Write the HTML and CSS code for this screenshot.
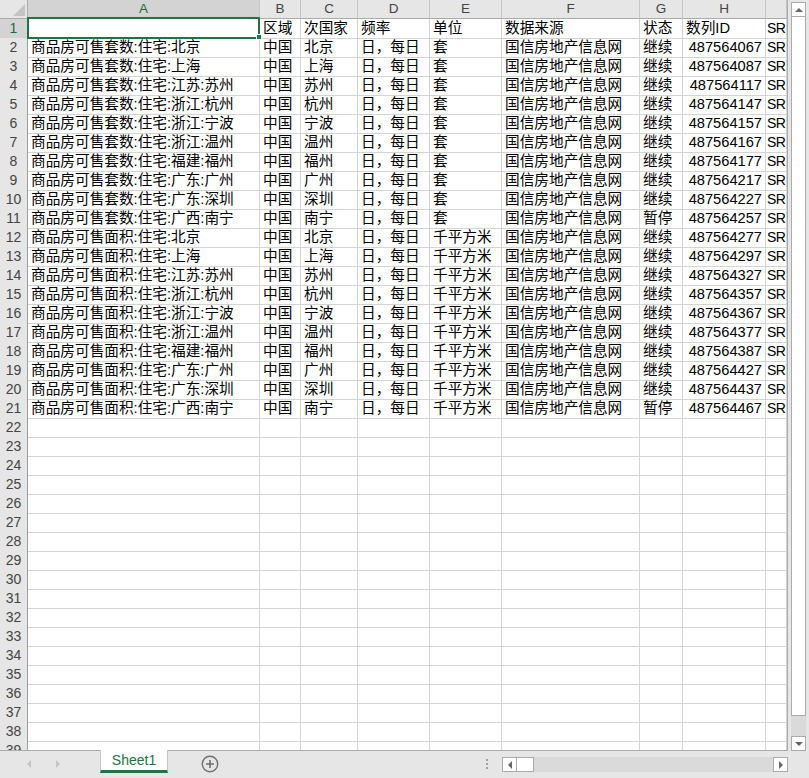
FILE: index.html
```html
<!DOCTYPE html>
<html lang="zh">
<head>
<meta charset="utf-8">
<title>Sheet1</title>
<link rel="stylesheet" href="styles.css">
</head>
<body>
<div class="app">
  <div class="main">
    <div class="sheet">
      <div class="row head">
        <div class="corner"><span class="corner-tri"></span></div>
        <div class="ch ch-sel">A</div><div class="ch">B</div><div class="ch">C</div><div class="ch">D</div><div class="ch">E</div><div class="ch">F</div><div class="ch">G</div><div class="ch">H</div><div class="ch"></div>
      </div>
      <div class="row"><div class="rh rh-sel">1</div><div class="c sel"><span class="handle"></span></div><div class="c">区域</div><div class="c">次国家</div><div class="c">频率</div><div class="c">单位</div><div class="c">数据来源</div><div class="c">状态</div><div class="c">数列ID</div><div class="c last">SR</div></div>
      <div class="row"><div class="rh">2</div><div class="c">商品房可售套数:住宅:北京</div><div class="c">中国</div><div class="c">北京</div><div class="c">日，每日</div><div class="c">套</div><div class="c">国信房地产信息网</div><div class="c">继续</div><div class="c num">487564067</div><div class="c last">SR</div></div>
      <div class="row"><div class="rh">3</div><div class="c">商品房可售套数:住宅:上海</div><div class="c">中国</div><div class="c">上海</div><div class="c">日，每日</div><div class="c">套</div><div class="c">国信房地产信息网</div><div class="c">继续</div><div class="c num">487564087</div><div class="c last">SR</div></div>
      <div class="row"><div class="rh">4</div><div class="c">商品房可售套数:住宅:江苏:苏州</div><div class="c">中国</div><div class="c">苏州</div><div class="c">日，每日</div><div class="c">套</div><div class="c">国信房地产信息网</div><div class="c">继续</div><div class="c num">487564117</div><div class="c last">SR</div></div>
      <div class="row"><div class="rh">5</div><div class="c">商品房可售套数:住宅:浙江:杭州</div><div class="c">中国</div><div class="c">杭州</div><div class="c">日，每日</div><div class="c">套</div><div class="c">国信房地产信息网</div><div class="c">继续</div><div class="c num">487564147</div><div class="c last">SR</div></div>
      <div class="row"><div class="rh">6</div><div class="c">商品房可售套数:住宅:浙江:宁波</div><div class="c">中国</div><div class="c">宁波</div><div class="c">日，每日</div><div class="c">套</div><div class="c">国信房地产信息网</div><div class="c">继续</div><div class="c num">487564157</div><div class="c last">SR</div></div>
      <div class="row"><div class="rh">7</div><div class="c">商品房可售套数:住宅:浙江:温州</div><div class="c">中国</div><div class="c">温州</div><div class="c">日，每日</div><div class="c">套</div><div class="c">国信房地产信息网</div><div class="c">继续</div><div class="c num">487564167</div><div class="c last">SR</div></div>
      <div class="row"><div class="rh">8</div><div class="c">商品房可售套数:住宅:福建:福州</div><div class="c">中国</div><div class="c">福州</div><div class="c">日，每日</div><div class="c">套</div><div class="c">国信房地产信息网</div><div class="c">继续</div><div class="c num">487564177</div><div class="c last">SR</div></div>
      <div class="row"><div class="rh">9</div><div class="c">商品房可售套数:住宅:广东:广州</div><div class="c">中国</div><div class="c">广州</div><div class="c">日，每日</div><div class="c">套</div><div class="c">国信房地产信息网</div><div class="c">继续</div><div class="c num">487564217</div><div class="c last">SR</div></div>
      <div class="row"><div class="rh">10</div><div class="c">商品房可售套数:住宅:广东:深圳</div><div class="c">中国</div><div class="c">深圳</div><div class="c">日，每日</div><div class="c">套</div><div class="c">国信房地产信息网</div><div class="c">继续</div><div class="c num">487564227</div><div class="c last">SR</div></div>
      <div class="row"><div class="rh">11</div><div class="c">商品房可售套数:住宅:广西:南宁</div><div class="c">中国</div><div class="c">南宁</div><div class="c">日，每日</div><div class="c">套</div><div class="c">国信房地产信息网</div><div class="c">暂停</div><div class="c num">487564257</div><div class="c last">SR</div></div>
      <div class="row"><div class="rh">12</div><div class="c">商品房可售面积:住宅:北京</div><div class="c">中国</div><div class="c">北京</div><div class="c">日，每日</div><div class="c">千平方米</div><div class="c">国信房地产信息网</div><div class="c">继续</div><div class="c num">487564277</div><div class="c last">SR</div></div>
      <div class="row"><div class="rh">13</div><div class="c">商品房可售面积:住宅:上海</div><div class="c">中国</div><div class="c">上海</div><div class="c">日，每日</div><div class="c">千平方米</div><div class="c">国信房地产信息网</div><div class="c">继续</div><div class="c num">487564297</div><div class="c last">SR</div></div>
      <div class="row"><div class="rh">14</div><div class="c">商品房可售面积:住宅:江苏:苏州</div><div class="c">中国</div><div class="c">苏州</div><div class="c">日，每日</div><div class="c">千平方米</div><div class="c">国信房地产信息网</div><div class="c">继续</div><div class="c num">487564327</div><div class="c last">SR</div></div>
      <div class="row"><div class="rh">15</div><div class="c">商品房可售面积:住宅:浙江:杭州</div><div class="c">中国</div><div class="c">杭州</div><div class="c">日，每日</div><div class="c">千平方米</div><div class="c">国信房地产信息网</div><div class="c">继续</div><div class="c num">487564357</div><div class="c last">SR</div></div>
      <div class="row"><div class="rh">16</div><div class="c">商品房可售面积:住宅:浙江:宁波</div><div class="c">中国</div><div class="c">宁波</div><div class="c">日，每日</div><div class="c">千平方米</div><div class="c">国信房地产信息网</div><div class="c">继续</div><div class="c num">487564367</div><div class="c last">SR</div></div>
      <div class="row"><div class="rh">17</div><div class="c">商品房可售面积:住宅:浙江:温州</div><div class="c">中国</div><div class="c">温州</div><div class="c">日，每日</div><div class="c">千平方米</div><div class="c">国信房地产信息网</div><div class="c">继续</div><div class="c num">487564377</div><div class="c last">SR</div></div>
      <div class="row"><div class="rh">18</div><div class="c">商品房可售面积:住宅:福建:福州</div><div class="c">中国</div><div class="c">福州</div><div class="c">日，每日</div><div class="c">千平方米</div><div class="c">国信房地产信息网</div><div class="c">继续</div><div class="c num">487564387</div><div class="c last">SR</div></div>
      <div class="row"><div class="rh">19</div><div class="c">商品房可售面积:住宅:广东:广州</div><div class="c">中国</div><div class="c">广州</div><div class="c">日，每日</div><div class="c">千平方米</div><div class="c">国信房地产信息网</div><div class="c">继续</div><div class="c num">487564427</div><div class="c last">SR</div></div>
      <div class="row"><div class="rh">20</div><div class="c">商品房可售面积:住宅:广东:深圳</div><div class="c">中国</div><div class="c">深圳</div><div class="c">日，每日</div><div class="c">千平方米</div><div class="c">国信房地产信息网</div><div class="c">继续</div><div class="c num">487564437</div><div class="c last">SR</div></div>
      <div class="row"><div class="rh">21</div><div class="c">商品房可售面积:住宅:广西:南宁</div><div class="c">中国</div><div class="c">南宁</div><div class="c">日，每日</div><div class="c">千平方米</div><div class="c">国信房地产信息网</div><div class="c">暂停</div><div class="c num">487564467</div><div class="c last">SR</div></div>
      <div class="row"><div class="rh">22</div><div class="c"></div><div class="c"></div><div class="c"></div><div class="c"></div><div class="c"></div><div class="c"></div><div class="c"></div><div class="c"></div><div class="c"></div></div>
      <div class="row"><div class="rh">23</div><div class="c"></div><div class="c"></div><div class="c"></div><div class="c"></div><div class="c"></div><div class="c"></div><div class="c"></div><div class="c"></div><div class="c"></div></div>
      <div class="row"><div class="rh">24</div><div class="c"></div><div class="c"></div><div class="c"></div><div class="c"></div><div class="c"></div><div class="c"></div><div class="c"></div><div class="c"></div><div class="c"></div></div>
      <div class="row"><div class="rh">25</div><div class="c"></div><div class="c"></div><div class="c"></div><div class="c"></div><div class="c"></div><div class="c"></div><div class="c"></div><div class="c"></div><div class="c"></div></div>
      <div class="row"><div class="rh">26</div><div class="c"></div><div class="c"></div><div class="c"></div><div class="c"></div><div class="c"></div><div class="c"></div><div class="c"></div><div class="c"></div><div class="c"></div></div>
      <div class="row"><div class="rh">27</div><div class="c"></div><div class="c"></div><div class="c"></div><div class="c"></div><div class="c"></div><div class="c"></div><div class="c"></div><div class="c"></div><div class="c"></div></div>
      <div class="row"><div class="rh">28</div><div class="c"></div><div class="c"></div><div class="c"></div><div class="c"></div><div class="c"></div><div class="c"></div><div class="c"></div><div class="c"></div><div class="c"></div></div>
      <div class="row"><div class="rh">29</div><div class="c"></div><div class="c"></div><div class="c"></div><div class="c"></div><div class="c"></div><div class="c"></div><div class="c"></div><div class="c"></div><div class="c"></div></div>
      <div class="row"><div class="rh">30</div><div class="c"></div><div class="c"></div><div class="c"></div><div class="c"></div><div class="c"></div><div class="c"></div><div class="c"></div><div class="c"></div><div class="c"></div></div>
      <div class="row"><div class="rh">31</div><div class="c"></div><div class="c"></div><div class="c"></div><div class="c"></div><div class="c"></div><div class="c"></div><div class="c"></div><div class="c"></div><div class="c"></div></div>
      <div class="row"><div class="rh">32</div><div class="c"></div><div class="c"></div><div class="c"></div><div class="c"></div><div class="c"></div><div class="c"></div><div class="c"></div><div class="c"></div><div class="c"></div></div>
      <div class="row"><div class="rh">33</div><div class="c"></div><div class="c"></div><div class="c"></div><div class="c"></div><div class="c"></div><div class="c"></div><div class="c"></div><div class="c"></div><div class="c"></div></div>
      <div class="row"><div class="rh">34</div><div class="c"></div><div class="c"></div><div class="c"></div><div class="c"></div><div class="c"></div><div class="c"></div><div class="c"></div><div class="c"></div><div class="c"></div></div>
      <div class="row"><div class="rh">35</div><div class="c"></div><div class="c"></div><div class="c"></div><div class="c"></div><div class="c"></div><div class="c"></div><div class="c"></div><div class="c"></div><div class="c"></div></div>
      <div class="row"><div class="rh">36</div><div class="c"></div><div class="c"></div><div class="c"></div><div class="c"></div><div class="c"></div><div class="c"></div><div class="c"></div><div class="c"></div><div class="c"></div></div>
      <div class="row"><div class="rh">37</div><div class="c"></div><div class="c"></div><div class="c"></div><div class="c"></div><div class="c"></div><div class="c"></div><div class="c"></div><div class="c"></div><div class="c"></div></div>
      <div class="row"><div class="rh">38</div><div class="c"></div><div class="c"></div><div class="c"></div><div class="c"></div><div class="c"></div><div class="c"></div><div class="c"></div><div class="c"></div><div class="c"></div></div>
      <div class="row"><div class="rh">39</div><div class="c"></div><div class="c"></div><div class="c"></div><div class="c"></div><div class="c"></div><div class="c"></div><div class="c"></div><div class="c"></div><div class="c"></div></div>
    </div>
    <div class="vscroll">
      <div class="sbtn"><span class="tri-up"></span></div>
      <div class="vthumb"></div>
      <div class="vtrack"></div>
      <div class="sbtn"><span class="tri-down"></span></div>
    </div>
  </div>
  <div class="bottombar">
    <div class="nav">
      <span class="tri-left light"></span>
      <span class="tri-right light"></span>
    </div>
    <div class="tab">Sheet1</div>
    <div class="add">
      <svg width="18" height="18" viewBox="0 0 18 18"><circle cx="9" cy="9" r="7.7" fill="none" stroke="#6f6f6f" stroke-width="1.4"/><path d="M9 5v8M5 9h8" stroke="#6f6f6f" stroke-width="1.6"/></svg>
    </div>
    <div class="spacer"></div>
    <div class="dots"><span></span><span></span><span></span></div>
    <div class="hscroll">
      <div class="hbtn"><span class="tri-left"></span></div>
      <div class="hthumb"></div>
      <div class="htrack"></div>
      <div class="hbtn"><span class="tri-right"></span></div>
    </div>
  </div>
</div>
</body>
</html>
```
FILE: styles.css
```css
* { box-sizing: border-box; }
html, body { margin: 0; padding: 0; }
body {
  width: 809px;
  height: 778px;
  overflow: hidden;
  background: #e6e6e6;
  font-family: "Liberation Sans", "Noto Sans CJK SC", sans-serif;
}
.app { width: 809px; height: 778px; display: flex; flex-direction: column; }
.main { display: flex; height: 751px; }
.sheet {
  width: 788px;
  height: 751px;
  overflow: hidden;
  background: #fff;
  border-right: 1px solid #ababab;
  border-bottom: 1px solid #ababab;
}
.row {
  display: grid;
  grid-template-columns: 28px 232px 41px 57px 72px 72px 138px 43px 83px 21px;
  height: 19px;
}
.row.head { height: 19px; }
.corner, .ch {
  background: #e6e6e6;
  border-bottom: 1px solid #ababab;
  border-right: 1px solid #c6c6c6;
}
.corner {
  display: flex;
  justify-content: flex-end;
  align-items: flex-end;
  padding: 0 2px 2px 0;
  border-right: 1px solid #ababab;
}
.corner-tri {
  width: 0; height: 0;
  border-left: 12px solid transparent;
  border-bottom: 12px solid #c4c4c4;
}
.ch {
  font-size: 13.5px;
  line-height: 18px;
  color: #444;
  text-align: center;
  overflow: hidden;
}
.ch-sel { background: #d3d3d3; color: #1d6b40; }
.rh {
  background: #e6e6e6;
  border-right: 1px solid #9e9e9e;
  border-bottom: 1px solid #cfcfcf;
  font-size: 14px;
  line-height: 19px;
  color: #444;
  text-align: center;
}
.rh-sel { background: #d3d3d3; color: #1d6b40; }
.c {
  border-right: 1px solid #d4d4d4;
  border-bottom: 1px solid #d4d4d4;
  font-size: 14.67px;
  line-height: 19px;
  color: #000;
  padding: 0 2px 0 3px;
  white-space: nowrap;
  overflow: hidden;
}
.c.num { text-align: right; padding-right: 3px; }
.c.last { padding: 0 0 0 1px; font-size: 14px; letter-spacing: -0.6px; }
.c.sel { position: relative; overflow: visible; z-index: 2; }
.c.sel::before {
  content: "";
  position: absolute;
  left: -1px; top: -2px; right: -1px; bottom: -1px;
  border: 2px solid #217346;
}
.handle {
  position: absolute;
  right: -3px; bottom: -2px;
  width: 6px; height: 6px;
  background: #217346;
  border: 1px solid #fff;
  z-index: 3;
}
.vscroll {
  width: 21px;
  padding: 2px 3px 0 3px;
  display: flex;
  flex-direction: column;
}
.sbtn {
  height: 15px;
  background: #fff;
  border: 1px solid #ababab;
  display: flex;
  align-items: center;
  justify-content: center;
}
.vthumb {
  height: 699px;
  background: #fff;
  border: 1px solid #ababab;
  border-top: none;
}
.vtrack { height: 20px; background: #dadada; }
.tri-up, .tri-down, .tri-left, .tri-right { width: 0; height: 0; display: block; }
.tri-up { border-left: 4px solid transparent; border-right: 4px solid transparent; border-bottom: 4px solid #666; }
.tri-down { border-left: 4px solid transparent; border-right: 4px solid transparent; border-top: 4px solid #666; }
.tri-left { border-top: 4px solid transparent; border-bottom: 4px solid transparent; border-right: 4px solid #666; }
.tri-right { border-top: 4px solid transparent; border-bottom: 4px solid transparent; border-left: 4px solid #666; }
.tri-left.light { border-right-color: #c4c4c4; }
.tri-right.light { border-left-color: #c4c4c4; }
.bottombar {
  height: 27px;
  display: flex;
  align-items: flex-start;
}
.nav {
  width: 100px;
  height: 26px;
  display: flex;
  align-items: center;
  padding-left: 27px;
  gap: 25px;
}
.tab {
  width: 68px;
  height: 23px;
  background: #fff;
  border-left: 1px solid #c6c6c6;
  border-right: 1px solid #c6c6c6;
  border-bottom: 3px solid #217346;
  color: #217346;
  font-size: 14px;
  line-height: 21px;
  text-align: center;
  margin-top: -1px;
}
.add { margin: 4px 0 0 33px; width: 18px; height: 18px; }
.add svg { display: block; }
.spacer { flex: 1; }
.dots {
  display: flex;
  flex-direction: column;
  gap: 2px;
  margin-top: 8px;
  margin-right: 14px;
}
.dots span { width: 2px; height: 2px; background: #a0a0a0; display: block; }
.hscroll {
  width: 286px;
  height: 15px;
  margin-top: 6px;
  margin-right: 21px;
  display: flex;
}
.hbtn {
  width: 15px;
  height: 15px;
  background: #fff;
  border: 1px solid #ababab;
  display: flex;
  align-items: center;
  justify-content: center;
}
.hthumb {
  width: 17px;
  background: #fff;
  border: 1px solid #ababab;
  border-left: none;
}
.htrack { flex: 1; background: #dadada; }
```
